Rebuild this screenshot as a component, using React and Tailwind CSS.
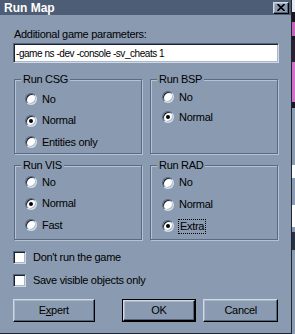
import React from "react";

const raised =
  "border border-t-[#d0dae6] border-l-[#d0dae6] border-b-black border-r-black shadow-[inset_-1px_-1px_0_#55647a,inset_1px_1px_0_#a9b7c8]";
const sunken =
  "border border-t-[#55647a] border-l-[#55647a] border-b-[#d0dae6] border-r-[#d0dae6] shadow-[inset_1px_1px_0_#1c2330,inset_-1px_-1px_0_#a9b7c8]";

const Radio = ({ checked }) => (
  <span
    className={`w-[12px] h-[12px] shrink-0 rounded-full bg-white flex items-center justify-center ${sunken}`}
  >
    {checked && <span className="w-[4px] h-[4px] rounded-full bg-black" />}
  </span>
);

const Group = ({ title, items, rowH, first, pad }) => (
  <div className="w-[128px] h-[75px] border border-[#5a6a81] shadow-[1px_1px_0_#b4c2d3,inset_1px_1px_0_#b4c2d3]">
    <div className="-mt-[7px] ml-[6px] w-fit px-[2px] leading-[13px] bg-[#8a9bb1]">
      {title}
    </div>
    <div className={`flex flex-col ${first} ${pad}`}>
      {items.map((it) => (
        <div key={it.label} className={`flex items-center gap-[5px] ${rowH}`}>
          <Radio checked={it.checked} />
          <span
            className={
              it.focus
                ? "leading-[13px] px-[1px] -ml-[1px] border border-dotted border-black"
                : "leading-[13px]"
            }
          >
            {it.label}
          </span>
        </div>
      ))}
    </div>
  </div>
);

const Check = ({ label }) => (
  <div className="flex items-center gap-[7px] h-[13px]">
    <span className={`w-[13px] h-[13px] bg-white ${sunken}`} />
    <span className="leading-[13px]">{label}</span>
  </div>
);

export default function App() {
  return (
    <div className="w-[295px] h-[334px] flex bg-[#8a9bb1] text-black text-[11px] tracking-[-0.3px] font-['Liberation_Sans',Arial,sans-serif] overflow-hidden">
      <div className="w-[292px] h-full flex flex-col border-r border-b border-[#1d2430]">
        {/* Title bar */}
        <div className="h-[15px] bg-[#4d5d76] flex items-center justify-between pl-[4px] pr-[2px]">
          <span className="text-white font-bold text-[12px] tracking-normal leading-none">
            Run Map
          </span>
          <span
            className={`w-[16px] h-[12px] bg-[#8a9bb1] flex items-center justify-center ${raised}`}
          >
            <svg width="8" height="7" viewBox="0 0 8 7">
              <path d="M0.5 0 L7.5 7 M7.5 0 L0.5 7" stroke="black" strokeWidth="1.6" />
            </svg>
          </span>
        </div>

        {/* Body */}
        <div className="flex flex-col px-[13px] pt-[13px]">
          <div className="leading-[13px] pl-[1px]">Additional game parameters:</div>
          <div
            className={`mt-[2px] h-[20px] w-[266px] bg-white flex items-center pl-[2px] text-[10px] tracking-[-0.45px] ${sunken}`}
          >
            -game ns -dev -console -sv_cheats 1
          </div>

          <div className="flex gap-[8px] mt-[16px] pl-[1px]">
            <Group
              title="Run CSG"
              rowH="h-[21.5px]"
              first="mt-[2.5px]"
              pad="pl-[10px]"
              items={[
                { label: "No" },
                { label: "Normal", checked: true },
                { label: "Entities only" },
              ]}
            />
            <Group
              title="Run BSP"
              rowH="h-[20px]"
              first="mt-[1px]"
              pad="pl-[11px]"
              items={[{ label: "No" }, { label: "Normal", checked: true }]}
            />
          </div>

          <div className="flex gap-[8px] mt-[11px] pl-[1px]">
            <Group
              title="Run VIS"
              rowH="h-[21.5px]"
              first="-mt-[0.5px]"
              pad="pl-[10px]"
              items={[
                { label: "No" },
                { label: "Normal", checked: true },
                { label: "Fast" },
              ]}
            />
            <Group
              title="Run RAD"
              rowH="h-[21.8px]"
              first="mt-0"
              pad="pl-[11px]"
              items={[
                { label: "No" },
                { label: "Normal" },
                { label: "Extra", checked: true, focus: true },
              ]}
            />
          </div>

          <div className="flex flex-col gap-[10px] mt-[11px]">
            <Check label="Don't run the game" />
            <Check label="Save visible objects only" />
          </div>

          <div className="flex items-center mt-[12px] h-[23px]">
            <button className={`w-[82px] h-[23px] bg-[#8a9bb1] leading-none ${raised}`}>
              E<span className="underline">x</span>pert
            </button>
            <div className="ml-[27px] w-[75px] h-[23px] border border-black">
              <button className={`w-full h-full bg-[#8a9bb1] leading-none ${raised}`}>
                OK
              </button>
            </div>
            <button className={`ml-[7px] w-[75px] h-[23px] bg-[#8a9bb1] leading-none ${raised}`}>
              Cancel
            </button>
          </div>
        </div>
      </div>

      {/* Sliver of the window behind */}
      <div className="flex-1 flex flex-col">
        <div className="h-[12px] bg-[#e8ecf2]" />
        <div className="h-[10px] bg-[#1a1620]" />
        <div className="h-[14px] bg-[#c860c0]" />
        <div className="h-[4px] bg-[#1a1620]" />
        <div className="h-[22px] bg-[#2a2030]" />
        <div className="h-[40px] bg-[#d070c8]" />
        <div className="h-[6px] bg-[#1a1620]" />
        <div className="h-[57px] bg-[#8a9bb1]" />
        <div className="h-[13px] bg-white" />
        <div className="h-[27px] bg-[#8a9bb1]" />
        <div className="h-[22px] bg-white" />
        <div className="h-[5px] bg-[#8a9bb1]" />
        <div className="h-[18px] bg-[#2a3240]" />
        <div className="flex-1 bg-[#8a9bb1]" />
      </div>
    </div>
  );
}
